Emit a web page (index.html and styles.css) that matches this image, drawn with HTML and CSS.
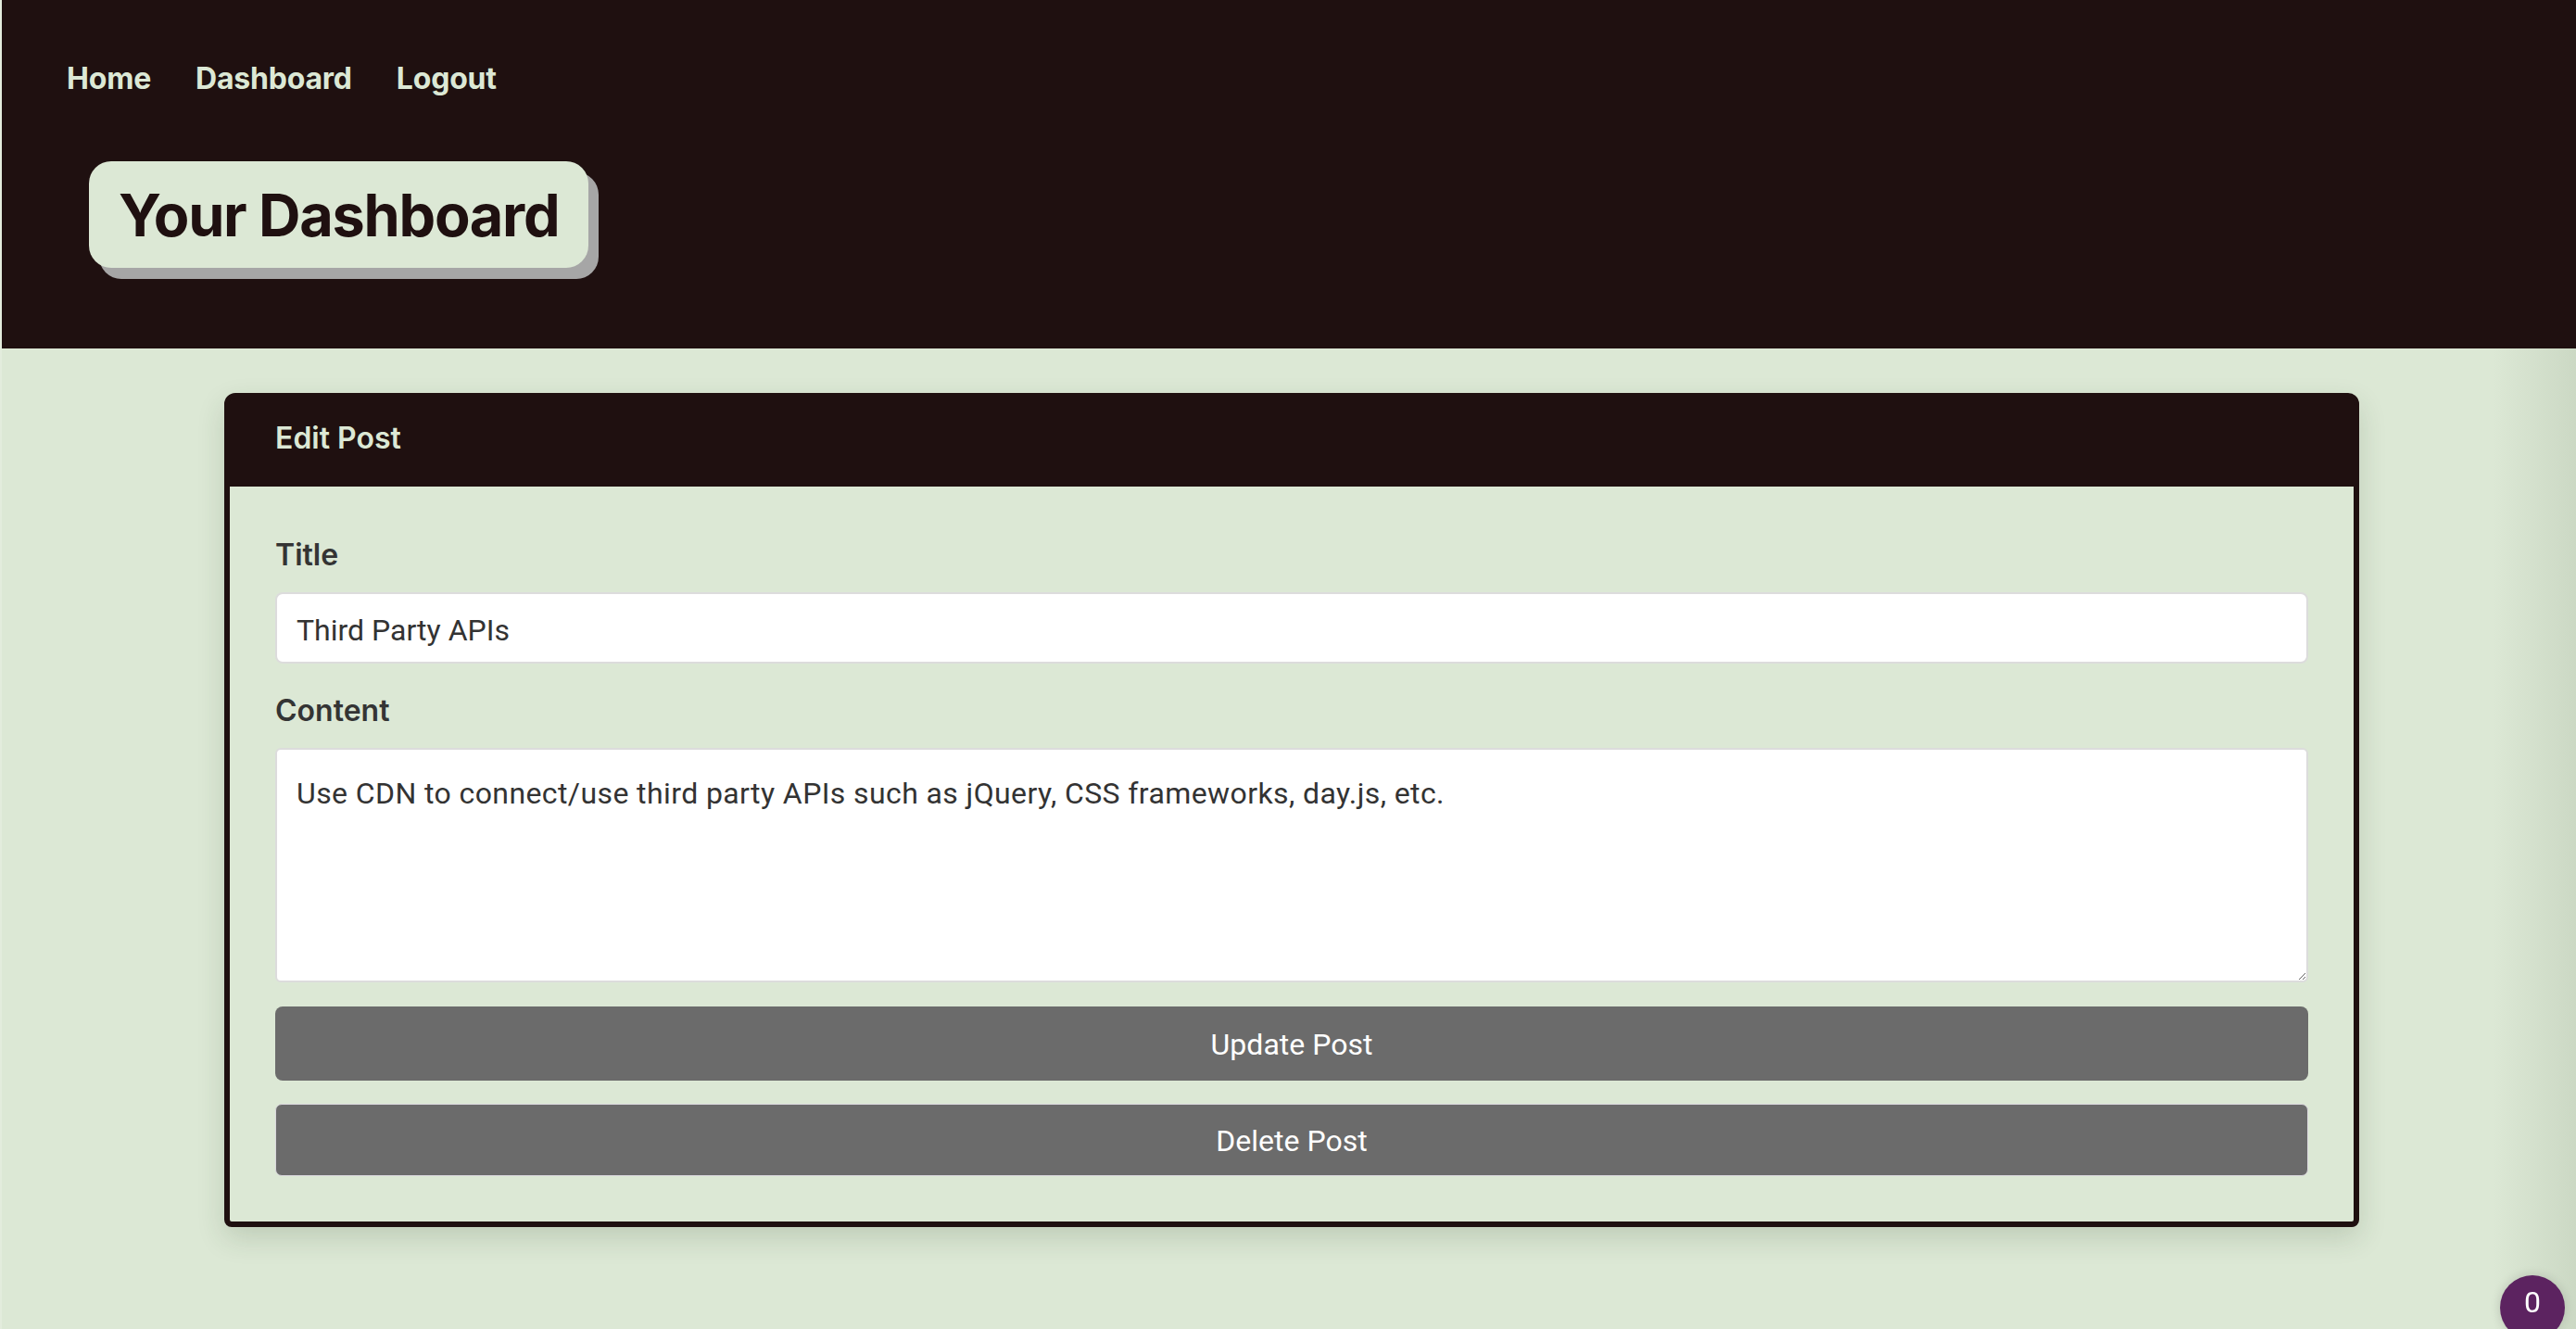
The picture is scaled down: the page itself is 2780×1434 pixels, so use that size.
FILE: index.html
```html
<!DOCTYPE html>
<html lang="en">
<head>
<meta charset="utf-8">
<title>Your Dashboard</title>
<link rel="stylesheet" href="styles.css">
</head>
<body>
<div class="page">
  <header class="site-header">
    <nav class="nav">
      <a href="#" class="nav-link">Home</a>
      <a href="#" class="nav-link">Dashboard</a>
      <a href="#" class="nav-link">Logout</a>
    </nav>
    <h1 class="page-title">Your Dashboard</h1>
  </header>
  <main class="main">
    <section class="card">
      <div class="card-header">Edit Post</div>
      <form class="card-body">
        <label class="field-label" for="title">Title</label>
        <input id="title" class="input" type="text" value="Third Party APIs">
        <label class="field-label field-label-gap" for="content">Content</label>
        <textarea id="content" class="textarea">Use CDN to connect/use third party APIs such as jQuery, CSS frameworks, day.js, etc.</textarea>
        <button type="button" class="btn btn-update">Update Post</button>
        <button type="button" class="btn btn-delete">Delete Post</button>
      </form>
    </section>
  </main>
</div>
<div class="badge">0</div>
</body>
</html>
```

FILE: styles.css
```css
* { box-sizing: border-box; }

html, body {
  margin: 0;
  padding: 0;
}

body {
  min-height: 1434px;
  background-color: #dce8d5;
  background-image: linear-gradient(to right, rgba(0,0,0,0) calc(100% - 90px), rgba(60,80,50,0.10) 100%);
  font-family: Roboto, "Liberation Sans", sans-serif;
  color: #333;
  overflow: hidden;
}

.page {
  min-height: 1434px;
  border-left: 2px solid rgba(255,255,255,0.2);
}

.site-header {
  background: #1f1010;
  height: 376px;
  padding: 66px 0 0 70px;
  position: relative;
  z-index: 1;
}

.nav {
  display: flex;
  gap: 48px;
}

.nav-link {
  font-family: Inter, "Liberation Sans", sans-serif;
  font-weight: 700;
  font-size: 32px;
  line-height: 38px;
  letter-spacing: -0.2px;
  color: #dce8d5;
  text-decoration: none;
}

.page-title {
  display: inline-block;
  margin: 70px 0 0 24px;
  height: 115px;
  padding: 17px 32px 15px;
  background: #dce8d5;
  color: #1f1010;
  border-radius: 24px;
  box-shadow: 11px 12px 0 #a6a6a6;
  font-family: Inter, "Liberation Sans", sans-serif;
  font-weight: 700;
  font-size: 63px;
  letter-spacing: -1.3px;
  line-height: 83px;
  white-space: nowrap;
}

.main {
  padding: 48px 0 0 6px;
}

.card {
  width: 2304px;
  margin: 0 auto;
  border: 6px solid #1f1010;
  border-radius: 12px 12px 8px 8px;
  background: #dce8d5;
  box-shadow: 0 12px 30px rgba(40,60,30,0.16);
}

.card-header {
  background: #1f1010;
  color: #dce8d5;
  font-family: Inter, "Liberation Sans", sans-serif;
  font-weight: 600;
  font-size: 32px;
  line-height: 38px;
  padding: 25px 46px 33px 50px;
  margin: -1px -1px 0;
  border-radius: 8px 8px 0 0;
}

.card-body {
  display: flex;
  flex-direction: column;
  padding: 55px 49px 49px;
}

.field-label {
  font-family: Inter, "Liberation Sans", sans-serif;
  font-weight: 600;
  font-size: 32px;
  line-height: 38px;
  color: #343434;
  margin-bottom: 21px;
}

.field-label-gap {
  margin-top: 32px;
}

.input,
.textarea {
  width: 100%;
  font-family: Roboto, "Liberation Sans", sans-serif;
  font-size: 32px;
  color: #333;
  background: #fff;
  border: 2px solid #dcdcdc;
  border-radius: 8px;
  outline: none;
}

.input {
  height: 77px;
  padding: 4px 21px 0;
}

.textarea {
  height: 253px;
  padding: 23px 21px 21px;
  line-height: 48px;
  letter-spacing: 0.4px;
  resize: vertical;
  border-radius: 6px;
}

.btn {
  width: 100%;
  font-family: Roboto, "Liberation Sans", sans-serif;
  font-size: 32px;
  color: #fff;
  background: #6b6b6b;
  cursor: pointer;
}

.btn-update {
  height: 80px;
  margin-top: 26px;
  padding-top: 3px;
  border: none;
  border-radius: 8px;
}

.btn-delete {
  height: 78px;
  margin-top: 25px;
  padding-top: 3px;
  border: 1px solid #d9d6dc;
  border-radius: 7px;
}

.badge {
  position: fixed;
  right: 12px;
  bottom: -12px;
  width: 70px;
  height: 70px;
  border-radius: 50%;
  background: #5c2360;
  color: #fff;
  font-family: Roboto, "Liberation Sans", sans-serif;
  font-size: 32px;
  text-align: center;
  padding-bottom: 12px;
  line-height: 58px;
  box-shadow: 0 0 12px rgba(0,0,0,0.15);
  z-index: 2;
}
```
